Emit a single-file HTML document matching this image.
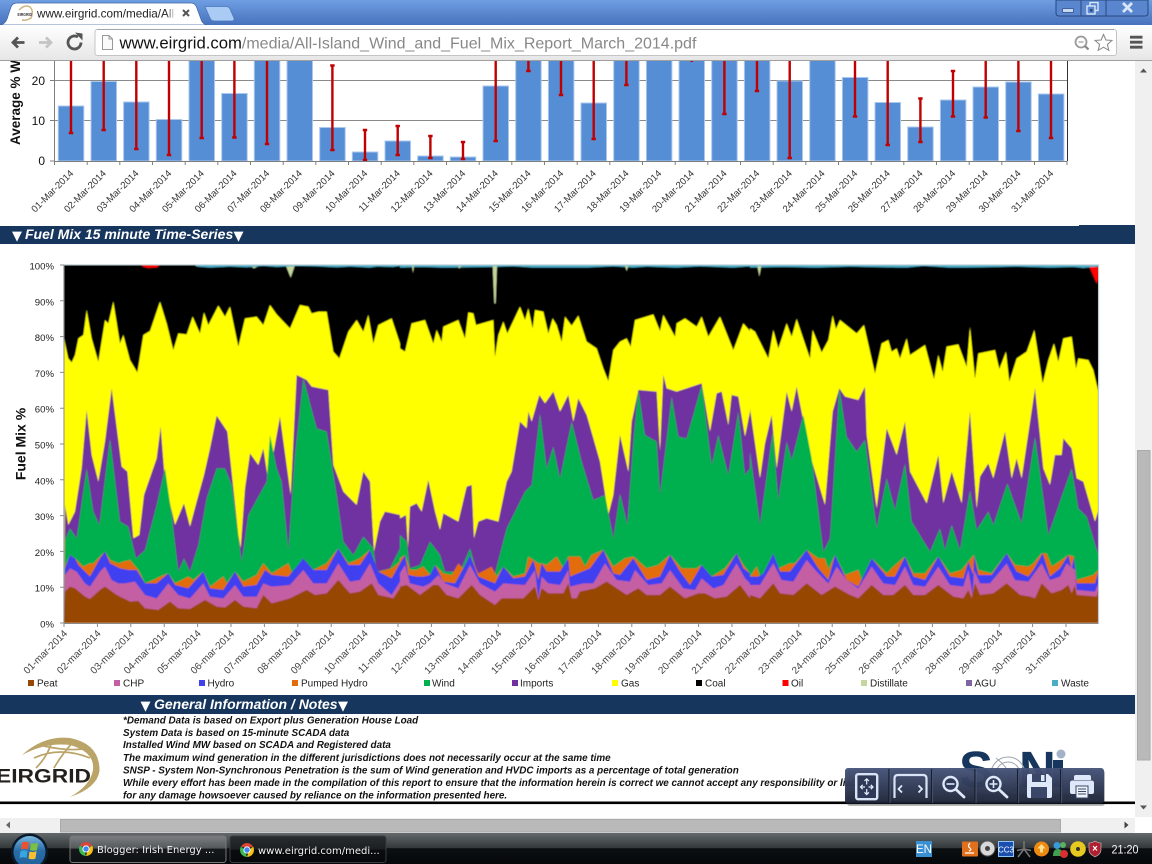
<!DOCTYPE html>
<html><head><meta charset="utf-8"><title>www.eirgrid.com/media/All-Island_Wind_and_Fuel_Mix_Report_March_2014.pdf</title>
<style>
html,body{margin:0;padding:0;background:#fff;width:1152px;height:864px;overflow:hidden}
svg{display:block;font-family:"Liberation Sans",sans-serif}
.xl{font-size:9.6px;fill:#333;text-anchor:end}
.xm{font-size:10px;fill:#444;text-anchor:end}
.yl{font-size:9.6px;fill:#222;text-anchor:end}
.lg{font-size:10px;fill:#222}
.nt{font-size:9.9px;font-weight:bold;font-style:italic;fill:#111}
.hd{font-size:14px;font-weight:bold;font-style:italic;fill:#fff}
.tri{font-size:13px;fill:#fff;font-family:"DejaVu Sans",sans-serif}
</style></head><body>
<svg width="1152" height="864" viewBox="0 0 1152 864" xmlns="http://www.w3.org/2000/svg">
<defs>
<filter id="bl" filterUnits="userSpaceOnUse" x="60" y="262" width="1042" height="365"><feGaussianBlur stdDeviation=".45"/></filter>
<linearGradient id="tb" x1="0" y1="0" x2="0" y2="1"><stop offset="0" stop-color="#6f9ee2"/><stop offset="1" stop-color="#4872bd"/></linearGradient>
<linearGradient id="tool" x1="0" y1="0" x2="0" y2="1"><stop offset="0" stop-color="#fff"/><stop offset="1" stop-color="#e6e6e6"/></linearGradient>
<linearGradient id="task" x1="0" y1="0" x2="0" y2="1"><stop offset="0" stop-color="#64696c"/><stop offset=".48" stop-color="#33383b"/><stop offset=".5" stop-color="#0c1013"/><stop offset="1" stop-color="#050709"/></linearGradient>
<linearGradient id="b1" x1="0" y1="0" x2="0" y2="1"><stop offset="0" stop-color="#7b7f82"/><stop offset=".45" stop-color="#55595c"/><stop offset=".5" stop-color="#15191c"/><stop offset="1" stop-color="#0d1114"/></linearGradient>
<linearGradient id="b2" x1="0" y1="0" x2="0" y2="1"><stop offset="0" stop-color="#2a2d2f"/><stop offset=".5" stop-color="#1c1f21"/><stop offset=".52" stop-color="#0a0d0f"/><stop offset="1" stop-color="#060809"/></linearGradient>
<linearGradient id="ov" x1="0" y1="0" x2="0" y2="1"><stop offset="0" stop-color="#46547a"/><stop offset="1" stop-color="#1c2336"/></linearGradient>
<linearGradient id="orb" x1="0" y1="0" x2="0" y2="1"><stop offset="0" stop-color="#7ab8e0"/><stop offset=".45" stop-color="#2a6ea8"/><stop offset="1" stop-color="#1f5f98"/></linearGradient>
<linearGradient id="fade" x1="0" y1="0" x2="1" y2="0"><stop offset="0" stop-color="#fff" stop-opacity="0"/><stop offset="1" stop-color="#fff"/></linearGradient>
<symbol id="chr" viewBox="-7.5 -7.5 15 15" overflow="visible">
<path d="M-6.06-3.5A7 7 0 0 1 6.06-3.5L0-2Z" fill="#db4437"/>
<path d="M6.06-3.5A7 7 0 0 1 0 7L2 0Z" fill="#f4c20d"/>
<path d="M0 7A7 7 0 0 1-6.06-3.5L-2 0Z" fill="#3cba54"/>
<circle r="3.6" fill="#fff"/><circle r="2.7" fill="#4285f4"/>
</symbol>
</defs>
<rect width="1152" height="864" fill="#fff"/>

<!-- Bar chart -->
<g fill="none" stroke="#8a8a8a" stroke-width="1"><path d="M55 80.5H1067M55 120.5H1067"/></g>
<g fill="#558ed5" stroke="#aac8ec" stroke-width="1">
<rect x="58.3" y="106" width="25.5" height="55"/><rect x="91" y="81.5" width="25.5" height="79.5"/><rect x="123.6" y="102" width="25.5" height="59"/><rect x="156.3" y="119.5" width="25.5" height="41.5"/><rect x="189" y="50" width="25.5" height="111"/><rect x="221.7" y="93.5" width="25.5" height="67.5"/><rect x="254.3" y="50" width="25.5" height="111"/><rect x="287" y="50" width="25.5" height="111"/><rect x="319.7" y="127.5" width="25.5" height="33.5"/><rect x="352.3" y="152" width="25.5" height="9"/><rect x="385" y="141" width="25.5" height="20"/><rect x="417.7" y="156" width="25.5" height="5"/><rect x="450.3" y="157" width="25.5" height="4"/><rect x="483" y="86" width="25.5" height="75"/><rect x="515.7" y="50" width="25.5" height="111"/><rect x="548.4" y="50" width="25.5" height="111"/><rect x="581" y="103" width="25.5" height="58"/><rect x="613.7" y="50" width="25.5" height="111"/><rect x="646.4" y="50" width="25.5" height="111"/><rect x="679" y="50" width="25.5" height="111"/><rect x="711.7" y="50" width="25.5" height="111"/><rect x="744.4" y="50" width="25.5" height="111"/><rect x="777" y="81" width="25.5" height="80"/><rect x="809.7" y="50" width="25.5" height="111"/><rect x="842.4" y="77.5" width="25.5" height="83.5"/><rect x="875" y="102.5" width="25.5" height="58.5"/><rect x="907.7" y="127" width="25.5" height="34"/><rect x="940.4" y="100" width="25.5" height="61"/><rect x="973" y="87" width="25.5" height="74"/><rect x="1005.7" y="82" width="25.5" height="79"/><rect x="1038.4" y="94" width="25.5" height="67"/>
</g>
<g fill="none" stroke="#c00000" stroke-width="2.4">
<path d="M71 50V133M103.7 50V130M136.3 50V149M169 50V155M201.7 50V138M234.4 50V137.5M267 50V144M332.4 65.5V150M365 130V160M397.7 126V155M430.4 136V158M463 142V159M495.7 50V141M528.4 50V71M561 50V95M593.7 50V139M626.4 50V85M691.7 50V62M724.4 50V114M757 50V91M789.7 50V158M855 50V116.5M887.7 50V145M920.4 98.5V142M953 71V116.5M985.7 50V117.5M1018.4 50V131M1051 50V138"/>
<path d="M68.8 133h4.4M101.5 130h4.4M134.1 149h4.4M166.8 155h4.4M199.5 138h4.4M232.2 137.5h4.4M264.8 144h4.4M330.2 150h4.4M330.2 65.5h4.4M362.8 160h4.4M362.8 130h4.4M395.5 155h4.4M395.5 126h4.4M428.2 158h4.4M428.2 136h4.4M460.8 159h4.4M460.8 142h4.4M493.5 141h4.4M526.2 71h4.4M558.8 95h4.4M591.5 139h4.4M624.2 85h4.4M722.2 114h4.4M754.8 91h4.4M787.5 158h4.4M852.8 116.5h4.4M885.5 145h4.4M918.2 142h4.4M918.2 98.5h4.4M950.8 116.5h4.4M950.8 71h4.4M983.5 117.5h4.4M1016.2 131h4.4M1048.8 138h4.4"/>
</g>
<g fill="none" stroke="#7f7f7f"><path d="M54.5 55V161.5H1067.5"/>
<path d="M54.5 161v4M87.2 161v4M119.8 161v4M152.5 161v4M185.2 161v4M217.8 161v4M250.5 161v4M283.2 161v4M315.8 161v4M348.5 161v4M381.2 161v4M413.8 161v4M446.5 161v4M479.2 161v4M511.8 161v4M544.5 161v4M577.2 161v4M609.8 161v4M642.5 161v4M675.2 161v4M707.8 161v4M740.5 161v4M773.2 161v4M805.8 161v4M838.5 161v4M871.2 161v4M903.8 161v4M936.5 161v4M969.2 161v4M1001.8 161v4M1034.5 161v4M1067 161v4"/>
<path d="M50 80.5h5M50 120.5h5M50 161h5"/></g>
<path d="M1067.5 55V161" stroke="#333" fill="none"/>
<g font-size="12" fill="#111" text-anchor="end"><text x="45" y="85">20</text><text x="45" y="125">10</text><text x="45" y="165">0</text></g>
<text transform="translate(20,145) rotate(-90)" font-size="13.5" font-weight="bold" fill="#111">Average % Wind</text>
<g>
<text class="xl" transform="translate(74,174) rotate(-45)">01-Mar-2014</text><text class="xl" transform="translate(106.7,174) rotate(-45)">02-Mar-2014</text><text class="xl" transform="translate(139.3,174) rotate(-45)">03-Mar-2014</text><text class="xl" transform="translate(172,174) rotate(-45)">04-Mar-2014</text><text class="xl" transform="translate(204.7,174) rotate(-45)">05-Mar-2014</text><text class="xl" transform="translate(237.4,174) rotate(-45)">06-Mar-2014</text><text class="xl" transform="translate(270,174) rotate(-45)">07-Mar-2014</text><text class="xl" transform="translate(302.7,174) rotate(-45)">08-Mar-2014</text><text class="xl" transform="translate(335.4,174) rotate(-45)">09-Mar-2014</text><text class="xl" transform="translate(368,174) rotate(-45)">10-Mar-2014</text><text class="xl" transform="translate(400.7,174) rotate(-45)">11-Mar-2014</text><text class="xl" transform="translate(433.4,174) rotate(-45)">12-Mar-2014</text><text class="xl" transform="translate(466,174) rotate(-45)">13-Mar-2014</text><text class="xl" transform="translate(498.7,174) rotate(-45)">14-Mar-2014</text><text class="xl" transform="translate(531.4,174) rotate(-45)">15-Mar-2014</text><text class="xl" transform="translate(564,174) rotate(-45)">16-Mar-2014</text><text class="xl" transform="translate(596.7,174) rotate(-45)">17-Mar-2014</text><text class="xl" transform="translate(629.4,174) rotate(-45)">18-Mar-2014</text><text class="xl" transform="translate(662,174) rotate(-45)">19-Mar-2014</text><text class="xl" transform="translate(694.7,174) rotate(-45)">20-Mar-2014</text><text class="xl" transform="translate(727.4,174) rotate(-45)">21-Mar-2014</text><text class="xl" transform="translate(760,174) rotate(-45)">22-Mar-2014</text><text class="xl" transform="translate(792.7,174) rotate(-45)">23-Mar-2014</text><text class="xl" transform="translate(825.4,174) rotate(-45)">24-Mar-2014</text><text class="xl" transform="translate(858,174) rotate(-45)">25-Mar-2014</text><text class="xl" transform="translate(890.7,174) rotate(-45)">26-Mar-2014</text><text class="xl" transform="translate(923.4,174) rotate(-45)">27-Mar-2014</text><text class="xl" transform="translate(956,174) rotate(-45)">28-Mar-2014</text><text class="xl" transform="translate(988.7,174) rotate(-45)">29-Mar-2014</text><text class="xl" transform="translate(1021.4,174) rotate(-45)">30-Mar-2014</text><text class="xl" transform="translate(1054,174) rotate(-45)">31-Mar-2014</text>
</g>

<!-- Section bar 1 -->
<rect x="0" y="226" width="1135" height="18" fill="#17365d"/><rect x="1079" y="225" width="56" height="2" fill="#17365d"/>
<text class="tri" x="12" y="240">▼</text><text class="hd" x="25" y="239">Fuel Mix 15 minute Time-Series</text><text class="tri" x="233.500" y="240">▼</text>

<!-- Area chart -->
<g filter="url(#bl)">
<rect x="64" y="265" width="1034.5" height="358" fill="#000"/>
<g transform="translate(50,255) scale(.33333)">
<polygon fill="#ff0" points="42,1104 42,250 55,310 65,322 75,300 85,250 100,240 110,165 125,250 145,320 165,195 175,205 190,140 210,265 220,240 240,315 262,352 280,240 300,228 330,140 350,205 370,285 385,235 410,238 428,185 450,235 462,172 475,210 505,152 525,185 540,155 565,275 585,190 620,185 640,210 660,150 680,178 720,220 750,150 775,155 785,175 805,170 830,170 850,290 868,310 895,230 920,195 940,230 955,180 970,265 985,210 1025,190 1050,265 1050,1104"/>
<polygon fill="#7030a0" points="42,1104 45,750 55,810 75,770 95,640 110,465 125,600 145,680 165,560 185,400 215,635 232,650 250,850 268,840 282,720 320,610 332,515 345,680 375,810 402,745 420,815 440,740 462,660 480,580 500,482 532,530 565,840 572,880 585,700 600,595 625,630 640,580 655,680 690,485 722,720 740,360 770,375 785,395 835,405 850,630 880,710 920,750 940,650 960,680 972,890 990,800 1005,770 1050,780 1050,1104"/>
<polygon fill="#00b050" points="42,1104 45,855 60,820 80,850 110,640 130,770 148,810 180,550 210,800 235,815 258,910 285,885 320,750 345,640 365,780 385,950 402,910 420,950 445,870 470,730 500,640 525,640 545,690 575,920 595,780 650,680 660,540 680,640 695,680 715,885 735,600 760,370 800,520 830,530 860,720 880,860 910,900 940,845 970,880 980,950 1020,940 1050,880 1050,1104"/>
<polygon fill="#e36c09" points="42,1104 45,935 60,900 75,910 90,925 100,935 120,925 130,925 150,905 165,890 180,915 205,925 220,920 240,915 265,945 285,985 310,975 330,965 355,955 375,985 415,965 430,975 460,950 480,995 520,965 530,985 555,950 580,980 620,960 640,925 665,955 715,925 730,965 760,910 790,945 830,925 865,880 895,925 930,910 960,885 985,950 1025,940 1050,920 1050,1104"/>
<polygon fill="#4040f0" points="42,1104 45,940 60,900 75,910 85,930 100,945 120,965 150,910 165,890 180,925 210,940 235,945 260,945 285,985 320,985 355,955 375,990 415,1000 460,950 480,1000 520,1005 555,950 580,995 620,990 645,945 665,960 715,965 760,910 790,945 830,945 865,880 895,930 930,930 960,885 985,950 1025,970 1050,925 1050,1104"/>
<polygon fill="#c55fa3" points="42,1104 45,960 60,940 80,950 105,985 120,995 150,950 165,935 185,975 205,985 225,985 255,980 285,1020 320,1030 355,985 385,1020 420,1030 460,985 480,1025 520,1030 555,990 580,1025 620,1025 640,985 665,995 720,990 760,945 790,985 830,985 865,925 900,980 930,975 960,925 985,985 1025,1020 1050,980 1050,1104"/>
<polygon fill="#974706" points="42,1104 45,1010 60,995 75,1000 105,1025 120,1032 150,1005 165,995 200,1020 240,1040 265,1038 285,1060 325,1065 360,1040 385,1060 420,1062 465,1035 500,1055 525,1058 555,1035 580,1055 620,1060 640,1020 665,1045 720,1030 770,1005 795,1020 830,1015 865,975 900,1015 930,1010 965,985 985,1020 1030,1030 1050,1000 1050,1104"/>
<polygon fill="#ff0000" points="275,30 328,30 322,37 295,39 280,36"/>
<polygon fill="#c3d69b" points="708,33 734,33 722,68"/>
<polygon fill="#c3d69b" points="600,33 625,33 612,40"/>
<polygon fill="#4bacc6" points="435,30 1050,30 1050,33 1030,36 980,35 960,38 900,35 860,37 800,34 740,33 680,36 640,33 590,37 540,35 480,38 440,35"/>
</g>
<g transform="translate(400,255) scale(.33333)">
<polygon fill="#ff0" points="0,1104 0,280 15,290 35,205 75,195 100,265 110,225 125,260 130,215 175,195 195,250 205,172 220,175 228,210 280,195 285,305 295,240 310,200 322,235 360,155 375,195 385,160 398,220 405,165 430,170 445,235 458,190 470,210 485,260 495,185 515,212 535,182 560,260 590,280 610,340 625,378 640,285 660,260 680,250 692,275 705,195 760,178 780,228 790,180 825,245 830,205 855,190 890,215 905,185 925,245 960,185 1000,285 1030,205 1050,228 1050,1104"/>
<polygon fill="#7030a0" points="0,1104 0,790 18,780 24,880 30,755 50,745 65,770 85,675 105,770 120,825 130,775 175,800 200,695 215,690 222,850 235,800 260,790 295,800 320,680 335,650 360,500 380,520 385,470 395,500 418,420 435,445 460,410 480,470 505,420 520,500 535,430 560,480 600,620 625,780 640,720 660,540 685,650 695,500 715,405 770,410 780,590 790,360 800,400 830,410 860,400 905,385 930,530 950,415 965,410 985,510 995,420 1015,425 1035,545 1050,470 1050,1104"/>
<polygon fill="#00b050" points="0,1104 0,840 20,860 30,940 60,930 90,860 120,900 135,950 180,950 210,880 235,965 285,955 320,820 375,710 395,690 420,475 440,640 460,575 480,670 515,500 545,620 580,735 615,720 640,850 660,715 682,810 700,560 715,405 735,540 770,560 780,720 815,425 835,545 860,550 905,390 935,630 955,540 985,660 1015,470 1035,660 1050,640 1050,1104"/>
<polygon fill="#e36c09" points="0,1104 0,910 15,900 30,945 50,945 70,935 90,960 105,930 130,955 155,960 175,925 190,940 210,900 235,955 275,935 290,965 310,935 340,965 375,955 385,905 400,915 415,925 425,925 440,930 470,905 490,940 505,905 540,905 555,935 575,900 610,885 640,935 675,910 700,905 740,940 775,930 810,900 845,940 890,940 905,930 935,965 975,940 1010,895 1030,930 1050,955 1050,1104"/>
<polygon fill="#4040f0" points="0,1104 0,925 15,900 25,960 50,965 70,965 90,960 105,930 130,980 165,985 190,940 210,900 235,965 285,985 310,935 340,970 375,965 400,915 415,975 425,925 440,950 480,950 505,910 510,965 570,940 610,885 640,955 660,960 700,910 740,975 780,965 810,900 840,950 870,990 905,930 935,965 970,960 1010,895 1030,940 1050,955 1050,1104"/>
<polygon fill="#c55fa3" points="0,1104 0,955 15,930 30,985 70,995 90,985 115,960 135,985 175,1000 210,930 240,985 285,1010 310,985 375,990 405,945 415,1030 425,965 445,985 480,990 505,945 510,995 550,985 580,985 615,925 650,975 690,980 705,945 745,990 785,985 810,945 850,1000 885,1005 905,970 940,1000 970,990 1010,925 1035,970 1050,985 1050,1104"/>
<polygon fill="#974706" points="0,1104 0,995 20,990 60,1020 100,990 115,990 140,1020 175,1030 215,990 240,1020 285,1050 305,1030 370,1030 405,995 415,1035 425,1000 445,1015 490,1015 505,985 515,1030 530,1030 540,1010 585,1000 620,980 680,1020 715,1000 740,1020 780,1020 810,995 855,1030 895,1015 915,1015 945,1030 980,1025 1020,990 1050,1030 1050,1104"/>
<polygon fill="#4bacc6" points="0,30 1050,30 1050,34 1000,38 900,34 830,38 740,35 700,38 640,34 560,38 480,38 400,38 340,34 280,36 200,37 130,38 70,36 0,38"/>
<polygon fill="#c3d69b" points="278,33 291,33 287,145 283,145"/>
<polygon fill="#c3d69b" points="36,33 42,33 39,55"/>
<polygon fill="#c3d69b" points="675,33 685,33 680,48"/>
<polygon fill="#c3d69b" points="174,33 184,33 178,41"/>
</g>
<g transform="translate(750,255) scale(.33333)">
<polygon fill="#ff0" points="0,1104 0,220 15,230 30,260 55,310 70,225 85,280 110,205 125,245 140,192 180,310 188,225 215,292 235,255 248,182 258,222 270,195 320,235 342,210 375,355 395,265 415,255 425,290 440,280 450,310 470,250 480,300 525,270 552,372 565,300 578,350 590,275 625,268 650,335 660,215 675,370 685,295 735,285 748,342 768,290 778,380 800,310 830,290 853,225 878,385 895,315 912,265 925,320 940,250 965,245 978,340 985,310 1015,315 1030,345 1045,410 1045,1104"/>
<polygon fill="#7030a0" points="0,1104 0,460 30,670 45,565 65,480 80,640 110,410 125,470 140,395 180,600 225,750 248,470 268,400 285,425 325,435 345,395 350,540 380,760 410,520 440,600 465,500 480,650 530,745 565,600 580,745 605,650 635,745 660,470 680,760 690,665 715,625 730,670 765,530 785,670 800,610 815,670 855,400 880,640 900,690 915,600 935,600 940,550 965,580 980,670 1000,680 1035,800 1045,765 1045,1104"/>
<polygon fill="#00b050" points="0,1104 0,590 30,810 68,530 85,735 110,560 125,615 160,480 185,610 220,890 240,850 268,400 290,545 320,590 345,555 380,820 410,670 435,765 465,625 485,800 540,890 570,820 585,885 605,810 630,885 660,705 680,825 715,770 730,810 772,685 815,805 855,545 895,840 935,725 965,640 985,760 1010,785 1045,900 1045,1104"/>
<polygon fill="#e36c09" points="0,1104 0,965 20,935 30,965 40,955 70,895 85,940 120,925 135,925 170,885 205,910 225,910 235,945 255,900 285,960 325,945 335,975 365,910 410,955 430,935 465,905 490,955 525,955 565,905 600,955 635,945 655,920 672,900 685,945 725,955 770,895 795,930 835,935 850,925 875,895 890,895 905,935 935,915 955,900 972,905 980,975 1030,960 1045,945 1045,1104"/>
<polygon fill="#4040f0" points="0,1104 0,965 25,965 40,955 70,895 90,950 120,950 170,885 205,940 235,975 255,900 290,975 325,995 365,910 410,965 435,965 465,905 490,965 525,975 565,905 600,965 640,970 655,920 670,960 672,900 685,960 725,960 770,895 800,950 835,965 850,945 878,895 900,965 930,940 955,900 965,940 972,905 980,985 1035,985 1045,950 1045,1104"/>
<polygon fill="#c55fa3" points="0,1104 0,990 30,990 70,925 95,975 130,980 170,915 200,950 235,985 260,935 290,975 325,1000 365,935 400,985 435,990 465,935 490,990 525,995 565,935 600,990 640,995 655,945 668,1020 672,945 690,985 720,985 770,925 795,975 835,980 875,925 900,975 930,965 950,925 975,945 980,1005 1035,1010 1045,985 1045,1104"/>
<polygon fill="#974706" points="0,1104 0,1020 30,1030 70,985 90,1015 130,1020 170,985 215,1020 255,995 300,1020 325,1030 365,990 400,1020 430,1020 465,990 490,1020 525,1020 565,990 610,1025 640,1030 655,1005 665,1030 675,985 690,1020 730,1015 770,985 810,1020 840,1025 855,1030 875,985 905,1015 935,1005 955,990 965,1015 975,990 980,1020 1040,1025 1045,1005 1045,1104"/>
<polygon fill="#4bacc6" points="0,30 1045,30 1045,35 1000,39 970,36 900,38 800,35 700,37 600,38 520,33 470,38 400,37 300,35 200,38 100,36 0,38"/>
<polygon fill="#c3d69b" points="22,33 34,33 28,64"/>
<polygon fill="#ff0000" points="1018,36 1045,36 1045,70 1040,86"/>
</g>
</g>
<path d="M64 265H1098.5V623" fill="none" stroke="#b9cdd4" stroke-width="1"/>
<g fill="none" stroke="#8a8a8a"><path d="M64 265V623.5H1098.5"/>
<path d="M60 265h4M60 300.8h4M60 336.6h4M60 372.4h4M60 408.2h4M60 444h4M60 479.8h4M60 515.6h4M60 551.4h4M60 587.2h4M60 623h4"/>
<path d="M64 623v4M97.4 623v4M130.8 623v4M164.2 623v4M197.6 623v4M231 623v4M264.4 623v4M297.8 623v4M331.2 623v4M364.6 623v4M398 623v4M431.4 623v4M464.8 623v4M498.2 623v4M531.6 623v4M565 623v4M598.4 623v4M631.8 623v4M665.2 623v4M698.6 623v4M732 623v4M765.4 623v4M798.8 623v4M832.2 623v4M865.6 623v4M899 623v4M932.4 623v4M965.8 623v4M999.2 623v4M1032.6 623v4M1066 623v4"/></g>
<text class="yl" x="54" y="269.5">100%</text><text class="yl" x="54" y="305.3">90%</text><text class="yl" x="54" y="341">80%</text><text class="yl" x="54" y="376.9">70%</text><text class="yl" x="54" y="412.7">60%</text><text class="yl" x="54" y="448.5">50%</text><text class="yl" x="54" y="484.3">40%</text><text class="yl" x="54" y="520.1">30%</text><text class="yl" x="54" y="555.9">20%</text><text class="yl" x="54" y="591.7">10%</text><text class="yl" x="54" y="627.5">0%</text>
<text transform="translate(25.5,444) rotate(-90)" font-size="14" font-weight="bold" fill="#111" text-anchor="middle">Fuel Mix %</text>
<g>
<text class="xm" transform="translate(68,634) rotate(-45)">01-mar-2014</text><text class="xm" transform="translate(101.4,634) rotate(-45)">02-mar-2014</text><text class="xm" transform="translate(134.8,634) rotate(-45)">03-mar-2014</text><text class="xm" transform="translate(168.2,634) rotate(-45)">04-mar-2014</text><text class="xm" transform="translate(201.6,634) rotate(-45)">05-mar-2014</text><text class="xm" transform="translate(235,634) rotate(-45)">06-mar-2014</text><text class="xm" transform="translate(268.4,634) rotate(-45)">07-mar-2014</text><text class="xm" transform="translate(301.8,634) rotate(-45)">08-mar-2014</text><text class="xm" transform="translate(335.2,634) rotate(-45)">09-mar-2014</text><text class="xm" transform="translate(368.6,634) rotate(-45)">10-mar-2014</text><text class="xm" transform="translate(402,634) rotate(-45)">11-mar-2014</text><text class="xm" transform="translate(435.4,634) rotate(-45)">12-mar-2014</text><text class="xm" transform="translate(468.8,634) rotate(-45)">13-mar-2014</text><text class="xm" transform="translate(502.2,634) rotate(-45)">14-mar-2014</text><text class="xm" transform="translate(535.6,634) rotate(-45)">15-mar-2014</text><text class="xm" transform="translate(569,634) rotate(-45)">16-mar-2014</text><text class="xm" transform="translate(602.4,634) rotate(-45)">17-mar-2014</text><text class="xm" transform="translate(635.8,634) rotate(-45)">18-mar-2014</text><text class="xm" transform="translate(669.2,634) rotate(-45)">19-mar-2014</text><text class="xm" transform="translate(702.6,634) rotate(-45)">20-mar-2014</text><text class="xm" transform="translate(736,634) rotate(-45)">21-mar-2014</text><text class="xm" transform="translate(769.4,634) rotate(-45)">22-mar-2014</text><text class="xm" transform="translate(802.8,634) rotate(-45)">23-mar-2014</text><text class="xm" transform="translate(836.2,634) rotate(-45)">24-mar-2014</text><text class="xm" transform="translate(869.6,634) rotate(-45)">25-mar-2014</text><text class="xm" transform="translate(903,634) rotate(-45)">26-mar-2014</text><text class="xm" transform="translate(936.4,634) rotate(-45)">27-mar-2014</text><text class="xm" transform="translate(969.8,634) rotate(-45)">28-mar-2014</text><text class="xm" transform="translate(1003.2,634) rotate(-45)">29-mar-2014</text><text class="xm" transform="translate(1036.6,634) rotate(-45)">30-mar-2014</text><text class="xm" transform="translate(1070,634) rotate(-45)">31-mar-2014</text>
</g>
<!-- Legend -->
<rect x="28" y="680" width="6" height="6" fill="#974706"/><text class="lg" x="37" y="686.5">Peat</text>
<rect x="114" y="680" width="6" height="6" fill="#c55fa3"/><text class="lg" x="123" y="686.5">CHP</text>
<rect x="199" y="680" width="6" height="6" fill="#4040f0"/><text class="lg" x="207.5" y="686.5">Hydro</text>
<rect x="292" y="680" width="6" height="6" fill="#e36c09"/><text class="lg" x="301" y="686.5">Pumped Hydro</text>
<rect x="424" y="680" width="6" height="6" fill="#00b050"/><text class="lg" x="432" y="686.5">Wind</text>
<rect x="512" y="680" width="6" height="6" fill="#7030a0"/><text class="lg" x="520" y="686.5">Imports</text>
<rect x="612" y="680" width="6" height="6" fill="#ff0"/><text class="lg" x="621" y="686.5">Gas</text>
<rect x="696" y="680" width="6" height="6" fill="#000"/><text class="lg" x="705" y="686.5">Coal</text>
<rect x="782.5" y="680" width="6" height="6" fill="#f00"/><text class="lg" x="791" y="686.5">Oil</text>
<rect x="861" y="680" width="6" height="6" fill="#c3d69b"/><text class="lg" x="870" y="686.5">Distillate</text>
<rect x="966" y="680" width="6" height="6" fill="#8064a2"/><text class="lg" x="974.5" y="686.5">AGU</text>
<rect x="1052" y="680" width="6" height="6" fill="#4bacc6"/><text class="lg" x="1061" y="686.5">Waste</text>

<!-- Section bar 2 -->
<rect x="0" y="695" width="1135" height="19" fill="#17365d"/>
<text class="tri" x="140.500" y="710">▼</text><text class="hd" x="154" y="709">General Information / Notes</text><text class="tri" x="338" y="710">▼</text>
<text class="nt" x="123" y="723.5">*Demand Data is based on Export plus Generation House Load</text>
<text class="nt" x="123" y="735.8">System Data is based on 15-minute SCADA data</text>
<text class="nt" x="123" y="748.2">Installed Wind MW based on SCADA and Registered data</text>
<text class="nt" x="123" y="760.8">The maximum wind generation in the different jurisdictions does not necessarily occur at the same time</text>
<text class="nt" x="123" y="773.5">SNSP - System Non-Synchronous Penetration is the sum of Wind generation and HVDC imports as a percentage of total generation</text>
<text class="nt" x="123" y="786.2">While every effort has been made in the compilation of this report to ensure that the information herein is correct we cannot accept any responsibility or liability</text>
<text class="nt" x="123" y="798.5">for any damage howsoever caused by reliance on the information presented here.</text>

<!-- EirGrid logo -->
<path d="M22 755Q44 735 70 738Q100 744 99.500 771Q97 788 70 797Q90 786 93 770Q95 752 70 745Q46 742 22 755Z" fill="#bba468"/>
<g fill="none" stroke="#bba468" stroke-width="1.700"><path d="M34 758Q60 746 90 758M44 746Q66 751 83 749M36 768Q48 756 52 741M54 768Q62 754 74 741"/></g>
<text x="-4" y="782.5" font-size="19.5" font-weight="bold" fill="#231f1a" textLength="95" lengthAdjust="spacingAndGlyphs">EIRGRID</text>

<!-- SONI logo -->
<text x="959" y="787" font-size="51" font-weight="bold" fill="#17365d">S</text>
<text x="1019" y="787" font-size="51" font-weight="bold" fill="#17365d">N</text>
<rect x="1053" y="760" width="10" height="27" fill="#17365d"/>
<circle cx="1061" cy="754" r="4.5" fill="#a4b2c8"/>
<g fill="none" stroke="#9aa4b0" stroke-width="1"><circle cx="1008" cy="774" r="17"/><circle cx="1008" cy="774" r="12"/><path d="M996 758Q1012 770 1016 792"/></g>
<text x="977" y="798" font-size="7.5" fill="#456">System Operator for Northern Ireland</text>

<rect x="0" y="801.5" width="1135" height="2.6" fill="#000"/>

<!-- Overlay toolbar -->
<rect x="847" y="770" width="258" height="36" rx="3" fill="#000" opacity=".28"/>
<rect x="845" y="768" width="259" height="35.5" rx="3" fill="url(#ov)" opacity=".95"/>
<g stroke="#141a28" stroke-width="1.2"><path d="M889 769V803M931.7 769V803M975 769V803M1017.7 769V803M1060.7 769V803"/></g>
<g stroke="#5a6788" stroke-width=".7"><path d="M890 769V803M932.7 769V803M976 769V803M1018.7 769V803M1061.7 769V803"/></g>
<rect x="856.2" y="774.2" width="21" height="25" rx="2" fill="#2e3a58" stroke="#d9e3f5" stroke-width="2.4"/>
<path d="M866.7 779v5.5M864.5 781l2.2-2.2 2.2 2.2M866.7 789v5.5M864.5 792.3l2.2 2.2 2.2-2.2M860.5 787h4.5M862.7 784.8l-2.2 2.2 2.2 2.2M868.5 787h4.5M870.8 784.8l2.2 2.2-2.2 2.2" fill="none" stroke="#e6eefc" stroke-width="1.2"/>
<path d="M894.5 798V778.5q0-3.5 3.5-3.5H923q3.5 0 3.5 3.5V798" fill="none" stroke="#d9e3f5" stroke-width="2.2"/>
<path d="M902 785.5l-3.5 3.5 3.5 3.5M918.5 785.5l3.5 3.5-3.5 3.5" fill="none" stroke="#e6eefc" stroke-width="1.7"/>
<circle cx="950.5" cy="784" r="7" fill="#2e3a58" stroke="#dfe8f8" stroke-width="2.4"/><path d="M946.5 784h8" stroke="#dfe8f8" stroke-width="1.6"/><path d="M956 789.5l8 7.5" stroke="#dfe8f8" stroke-width="2.8" stroke-linecap="round"/>
<circle cx="993.5" cy="784" r="7" fill="#2e3a58" stroke="#dfe8f8" stroke-width="2.4"/><path d="M989.5 784h8M993.5 780v8" stroke="#dfe8f8" stroke-width="1.6"/><path d="M999 789.5l8 7.5" stroke="#dfe8f8" stroke-width="2.8" stroke-linecap="round"/>
<path d="M1027 776q0-2 2-2h19l4 4v18q0 2-2 2h-21q-2 0-2-2Z" fill="#dfe8f8"/>
<rect x="1032" y="774" width="14" height="8" fill="#3a4768"/><rect x="1041" y="775" width="3.5" height="6" fill="#dfe8f8"/>
<rect x="1031" y="787" width="16" height="11" fill="#3a4768"/>
<path d="M1074 780v-3q0-2 2-2h13q2 0 2 2v3Z" fill="#dfe8f8"/>
<path d="M1070 783q0-2.5 2.5-2.5h19q2.5 0 2.5 2.5v9q0 2-2 2h-20q-2 0-2-2Z" fill="#dfe8f8"/>
<rect x="1076" y="786" width="12" height="12" fill="#eef3fb" stroke="#3a4768" stroke-width="1"/><path d="M1078 789h8M1078 791.5h8M1078 794h8" stroke="#3a4768" stroke-width=".9"/>

<!-- Vertical scrollbar -->
<rect x="1135" y="61" width="17" height="756" fill="#f0f0f0"/>
<path d="M1140 72.5l3.5-4 3.5 4Z" fill="#555"/>
<rect x="1137.5" y="450.5" width="12.5" height="309.5" fill="#b9b9b9" stroke="#aaa"/>
<path d="M1140 805.5l3.5 4 3.5-4Z" fill="#555"/>
<!-- Horizontal scrollbar -->
<rect x="0" y="818" width="1135" height="15" fill="#f0f0f0"/>
<rect x="60.5" y="819.5" width="1000" height="12.5" fill="#b9b9b9" stroke="#aaa"/>
<path d="M10 821.5v7l-4-3.5Z" fill="#666"/><path d="M1124.5 821.5v7l4-3.5Z" fill="#444"/>
<rect x="1135" y="817" width="17" height="16" fill="#fff"/>

<!-- Taskbar -->
<rect x="0" y="833" width="1152" height="31" fill="url(#task)"/>
<circle cx="29.5" cy="852" r="18.5" fill="#0a1a2a"/><circle cx="29.5" cy="852" r="16" fill="url(#orb)"/>
<path d="M22 842.5q4-1.500 7 0l-1 7q-3-1.500-7 0Z" fill="#e8542e"/><path d="M31 843q4 1.500 7-.5l-1 7.500q-3 1.500-7 0Z" fill="#7ec040"/>
<path d="M20.500 851q4-1.500 7 0l-1 7q-3-1.500-7 0Z" fill="#38a4e0"/><path d="M29.500 851.500q4 1.500 7-.5l-1 7.500q-3 1.500-7 0Z" fill="#f8c030"/>
<rect x="70" y="836" width="156" height="26.500" rx="2.500" fill="url(#b1)" stroke="#777"/>
<rect x="230" y="836" width="156" height="26.500" rx="2.500" fill="url(#b2)" stroke="#3a3d40"/>
<use href="#chr" x="78.500" y="841.500" width="15" height="15"/>
<use href="#chr" x="239.500" y="842.500" width="15" height="15"/>
<text x="97" y="853" font-family="'DejaVu Sans',sans-serif" font-size="10" fill="#f4f4f4">Blogger: Irish Energy ...</text>
<text x="258" y="854" font-family="'DejaVu Sans',sans-serif" font-size="10" fill="#f4f4f4">www.eirgrid.com/medi...</text>
<!-- Tray -->
<rect x="916" y="841" width="16" height="16" fill="#3a8fd0"/><text x="924" y="853" text-anchor="middle" font-size="11.500" fill="#fff">EN</text>
<rect x="962" y="841.500" width="16" height="15" rx="1" fill="#e0701c"/><path d="M970 843q-3 3 0 5q2 2-1 3M965 853h9" fill="none" stroke="#fff" stroke-width="1.200"/>
<circle cx="987.500" cy="848.500" r="7.500" fill="#d8d8d8" stroke="#555"/><circle cx="987.500" cy="848.500" r="2.500" fill="#444"/>
<rect x="998.500" y="841.500" width="15" height="15" fill="#1a4fb0" stroke="#8ec4f4"/><text x="1006" y="852.500" text-anchor="middle" font-size="8" fill="#fff">CC3</text>
<path d="M1024 841v8l-7 1.500M1024 849l7 1.500M1024 849l-6 8M1024 849l6 8" stroke="#777" stroke-width="1.500" fill="none"/>
<circle cx="1041.500" cy="849" r="7.500" fill="#ee8a10"/><path d="M1041.500 844l4 4.500h-2.500v4h-3v-4h-2.500Z" fill="#ffe090"/>
<circle cx="1057" cy="845.500" r="3.500" fill="#3a9ad8"/><circle cx="1063" cy="845" r="3" fill="#58b060"/><path d="M1053 856q0-7 5-7t5 7Z" fill="#40a050"/><circle cx="1064" cy="854" r="4" fill="#d83030"/>
<circle cx="1078" cy="849" r="7.800" fill="#e6c820"/><circle cx="1078" cy="849" r="2" fill="#333"/>
<path d="M1089 843q3 0 6-2q3 2 6 2v7q0 4-6 7q-6-3-6-7Z" fill="#b02030" stroke="#ccc" stroke-width=".6"/><path d="M1093 846l4 4.500M1097 846l-4 4.500" stroke="#fff" stroke-width="1.200"/>
<text x="1111.500" y="853.500" font-size="12" fill="#f4f4f4" textLength="27" lengthAdjust="spacingAndGlyphs">21:20</text>

<!-- Browser chrome -->
<rect x="0" y="0" width="1152" height="25" fill="url(#tb)"/>
<path d="M0 25Q6 24 8 16L11 7Q12.500 3 17 3H191Q195 3 196.500 7L200.500 18Q202 24 207 25Z" fill="#fff" stroke="#3e66a8" stroke-width=".7"/>
<path d="M205 6.500H226Q229 6.500 230 9L234 18Q235 21 231 21H214Q211 21 210 18L205.500 8Z" fill="#a9cbf4" stroke="#4a76bd" stroke-width=".8"/>
<path d="M19 10Q25 4 30 7Q34 11 31 18Q26 21 22 20" fill="none" stroke="#cbb682" stroke-width="1.500"/>
<text x="17.500" y="16" font-size="4.500" font-weight="bold" fill="#333" textLength="14.500" lengthAdjust="spacingAndGlyphs">EIRGRID</text>
<text x="37" y="17.500" font-size="11.700" fill="#222">www.eirgrid.com/media/All-I</text>
<rect x="166" y="5" width="10" height="18" fill="url(#fade)"/><rect x="176" y="5" width="6" height="18" fill="#fff"/>
<path d="M183 10l6 6M189 10l-6 6" stroke="#555" stroke-width="2"/>
<!-- Window controls -->
<path d="M1056 0V13q0 3 3 3H1145q3 0 3-3V0Z" fill="#5a86cf" stroke="#27487e"/>
<path d="M1081 0V16M1106 0V16" stroke="#27487e"/>
<rect x="1062.500" y="8.500" width="11" height="4" rx="1" fill="#c5d8f2" stroke="#27487e" stroke-width=".7"/>
<rect x="1090" y="2.500" width="8" height="8" fill="none" stroke="#d8e6f8" stroke-width="1.400"/><rect x="1087" y="6" width="8" height="8" fill="#5a86cf" stroke="#d8e6f8" stroke-width="1.400"/><rect x="1090" y="9" width="2.500" height="2.500" fill="#27487e"/>
<path d="M1123 3l9 9M1132 3l-9 9" stroke="#d8e6f8" stroke-width="2.800"/>
<!-- Toolbar -->
<rect x="0" y="25" width="1152" height="35.500" fill="url(#tool)"/>
<path d="M0 60.500H1152" stroke="#a0a0a0"/>
<path d="M24.500 42.500H13M18 37.500l-5 5 5 5" fill="none" stroke="#555" stroke-width="2.800"/>
<path d="M39 42.500H51M46 37.500l5 5-5 5" fill="none" stroke="#c4c4c4" stroke-width="2.800"/>
<path d="M81 42.500A6.500 6.500 0 1 1 78 37" fill="none" stroke="#555" stroke-width="2.800"/><path d="M75 32.500l7.500 1v7Z" fill="#555"/>
<rect x="95" y="29.500" width="1021.500" height="26" rx="2.500" fill="#fff" stroke="#c4c4c4"/><path d="M97 29.500H1114" stroke="#a6a6a6"/>
<path d="M102.500 35.500h6.500l3.500 3.500v10.500h-10Z" fill="#fafafa" stroke="#999"/><path d="M109 35.500v3.500h3.500" fill="none" stroke="#999"/>
<text x="119.500" y="48.500" font-size="16.700" fill="#111">www.eirgrid.com<tspan fill="#888" font-size="16">/media/All-Island_Wind_and_Fuel_Mix_Report_March_2014.pdf</tspan></text>
<circle cx="1081" cy="42" r="5.500" fill="none" stroke="#999" stroke-width="1.800"/><path d="M1078.500 42h5" stroke="#999" stroke-width="1.200"/><path d="M1085 46l3.500 3.500" stroke="#888" stroke-width="2.200"/>
<path d="M1103.500 34.500l2.400 5.500 6 .5-4.500 4 1.400 5.800-5.300-3.100-5.300 3.100 1.400-5.800-4.500-4 6-.5Z" fill="#fff" stroke="#8c8c8c" stroke-width="1.100"/>
<path d="M1130 37.200h12.500M1130 42.200h12.500M1130 47.200h12.500" stroke="#555" stroke-width="2.800"/>
</svg>
</body></html>
